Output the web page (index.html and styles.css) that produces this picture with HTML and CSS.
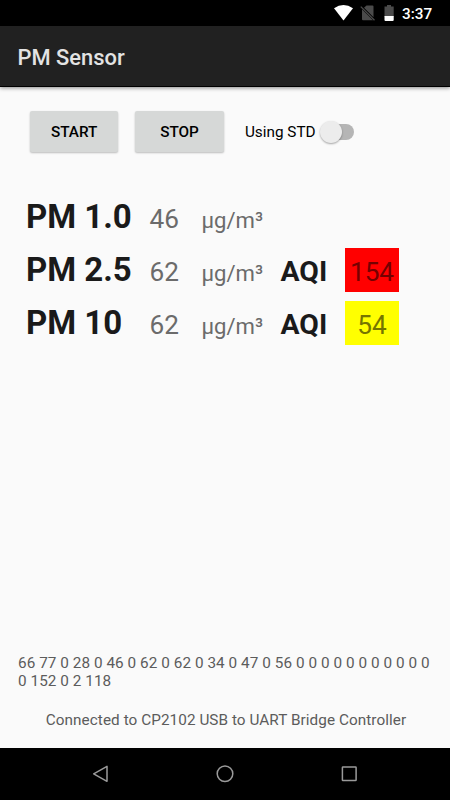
FILE: index.html
```html
<!DOCTYPE html>
<html lang="en">
<head>
<meta charset="utf-8">
<title>PM Sensor</title>
<link rel="stylesheet" href="styles.css">
</head>
<body>
<div class="status">
  <svg class="status-icons" width="64" height="26" viewBox="0 0 64 26">
    <path fill="#fff" d="M0 8.200Q9.500 1.800 19 8.200L9.500 20.500Z"/>
    <path fill="#4b4b4b" d="M32.500 5.500H38.500Q39.500 5.500 39.500 6.500V17.300L30 7.800ZM28 9.300L39 20.300H29Q28 20.300 28 19.300Z"/>
    <path stroke="#4b4b4b" stroke-width="1.300" d="M26.800 6.600L40.500 20.300"/>
    <path fill="#4b4b4b" d="M53 5h4v1.500h2.700V17H50.500V6.500H53Z"/>
    <path fill="#fff" d="M50.500 16h9.200v4q0 1-1 1h-7.200q-1 0-1-1Z"/>
  </svg>
  <span class="clock">3:37</span>
</div>
<header class="appbar"><h1>PM Sensor</h1></header>
<main>
  <div class="controls">
    <button class="btn">START</button>
    <button class="btn">STOP</button>
    <div class="switch"><span>Using STD</span><span class="track"><span class="thumb"></span></span></div>
  </div>
  <div class="readings">
    <div class="row"><span class="name">PM 1.0</span><span class="value">46</span><span class="unit">µg/m³</span></div>
    <div class="row"><span class="name">PM 2.5</span><span class="value">62</span><span class="unit">µg/m³</span><span class="aqi">AQI</span><span class="index red">154</span></div>
    <div class="row"><span class="name">PM 10</span><span class="value">62</span><span class="unit">µg/m³</span><span class="aqi">AQI</span><span class="index yellow">54</span></div>
  </div>
  <p class="raw">66 77 0 28 0 46 0 62 0 62 0 34 0 47 0 56 0 0 0 0 0 0 0 0 0 0 0<br>0 152 0 2 118</p>
  <p class="connection">Connected to CP2102 USB to UART Bridge Controller</p>
</main>
<nav class="navbar">
  <svg width="450" height="52" viewBox="0 0 450 52" fill="none" stroke="#9a9a9a" stroke-width="1.500" stroke-linejoin="round">
    <path d="M107 18.300V33.300L93.700 25.800Z"/>
    <circle cx="225" cy="25.700" r="7.800"/>
    <rect x="342.400" y="18.900" width="13.700" height="13.700" rx=".6"/>
  </svg>
</nav>
</body>
</html>
```

FILE: styles.css
```css
* { box-sizing: border-box; }
body {
  margin: 0;
  width: 450px;
  height: 800px;
  display: flex;
  flex-direction: column;
  overflow: hidden;
  background: #fafafa;
  font-family: Roboto, sans-serif;
}
.status {
  height: 26px;
  background: #000;
  display: flex;
  justify-content: flex-end;
  padding-right: 18px;
}
.status-icons { margin-right: 4px; }
.clock {
  width: 30px;
  color: #fff;
  font-size: 15.3px;
  font-weight: 500;
  line-height: 28px;
  white-space: nowrap;
}
.appbar {
  height: 61px;
  padding-left: 17.5px;
  background: #212121;
  border-bottom: 1px solid #000;
  box-shadow: 0 1px 4px rgba(0, 0, 0, .45);
}
h1 {
  margin: 0;
  color: #e3e3e3;
  font-size: 21.9px;
  font-weight: 500;
  line-height: 64px;
}
main {
  flex: 1;
  display: flex;
  flex-direction: column;
}
.controls {
  display: flex;
  align-items: center;
  height: 41px;
  margin: 24px 0 0 30px;
}
.btn {
  width: 88.400px;
  height: 41px;
  margin: 0 16.900px 0 0;
  padding: 0;
  border: 0;
  border-radius: 2px;
  background: #d6d8d7;
  box-shadow: 0 1px 2px rgba(0, 0, 0, .25);
  color: #000;
  font: 500 15.3px Roboto, sans-serif;
}
.switch {
  display: flex;
  align-items: center;
  margin-left: 4.400px;
  font-size: 15.3px;
  color: #000;
}
.track {
  width: 30px;
  height: 16px;
  margin-left: 8px;
  border-radius: 8px;
  background: #b5b5b5;
  display: flex;
  align-items: center;
}
.thumb {
  flex: none;
  width: 22px;
  height: 22px;
  margin-left: -4px;
  border-radius: 50%;
  background: #ececec;
  box-shadow: 0 1px 2px rgba(0, 0, 0, .35);
}
.readings {
  margin: 43px 0 0 26px;
  display: grid;
  row-gap: 9px;
}
.row {
  display: grid;
  grid-template-columns: 123.500px 52px 79px 64.500px 54px;
  height: 44px;
  align-items: baseline;
  line-height: 44px;
  color: #6b6b6b;
}
.name {
  font-size: 33px;
  font-weight: 700;
  color: #1a1a1a;
}
.value { font-size: 26.2px; }
.unit { font-size: 22.1px; }
.aqi {
  font-size: 28.4px;
  font-weight: 700;
  color: #1a1a1a;
}
.index {
  align-self: start;
  height: 44px;
  line-height: 48px;
  font-size: 26.2px;
  text-align: center;
}
.red { background: #f00; color: #750000; }
.yellow { background: #ff0; color: #757500; }
.raw, .connection {
  margin: 0;
  color: #5c5c5c;
  font-size: 15.3px;
  line-height: 18px;
}
.raw {
  margin: auto 0 21px 18px;
  letter-spacing: .055px;
  white-space: nowrap;
}
.connection {
  margin-bottom: 19px;
  padding-left: 2px;
  letter-spacing: .06px;
  text-align: center;
}
.navbar {
  height: 52px;
  background: #000;
}
.navbar svg { display: block; }
```
